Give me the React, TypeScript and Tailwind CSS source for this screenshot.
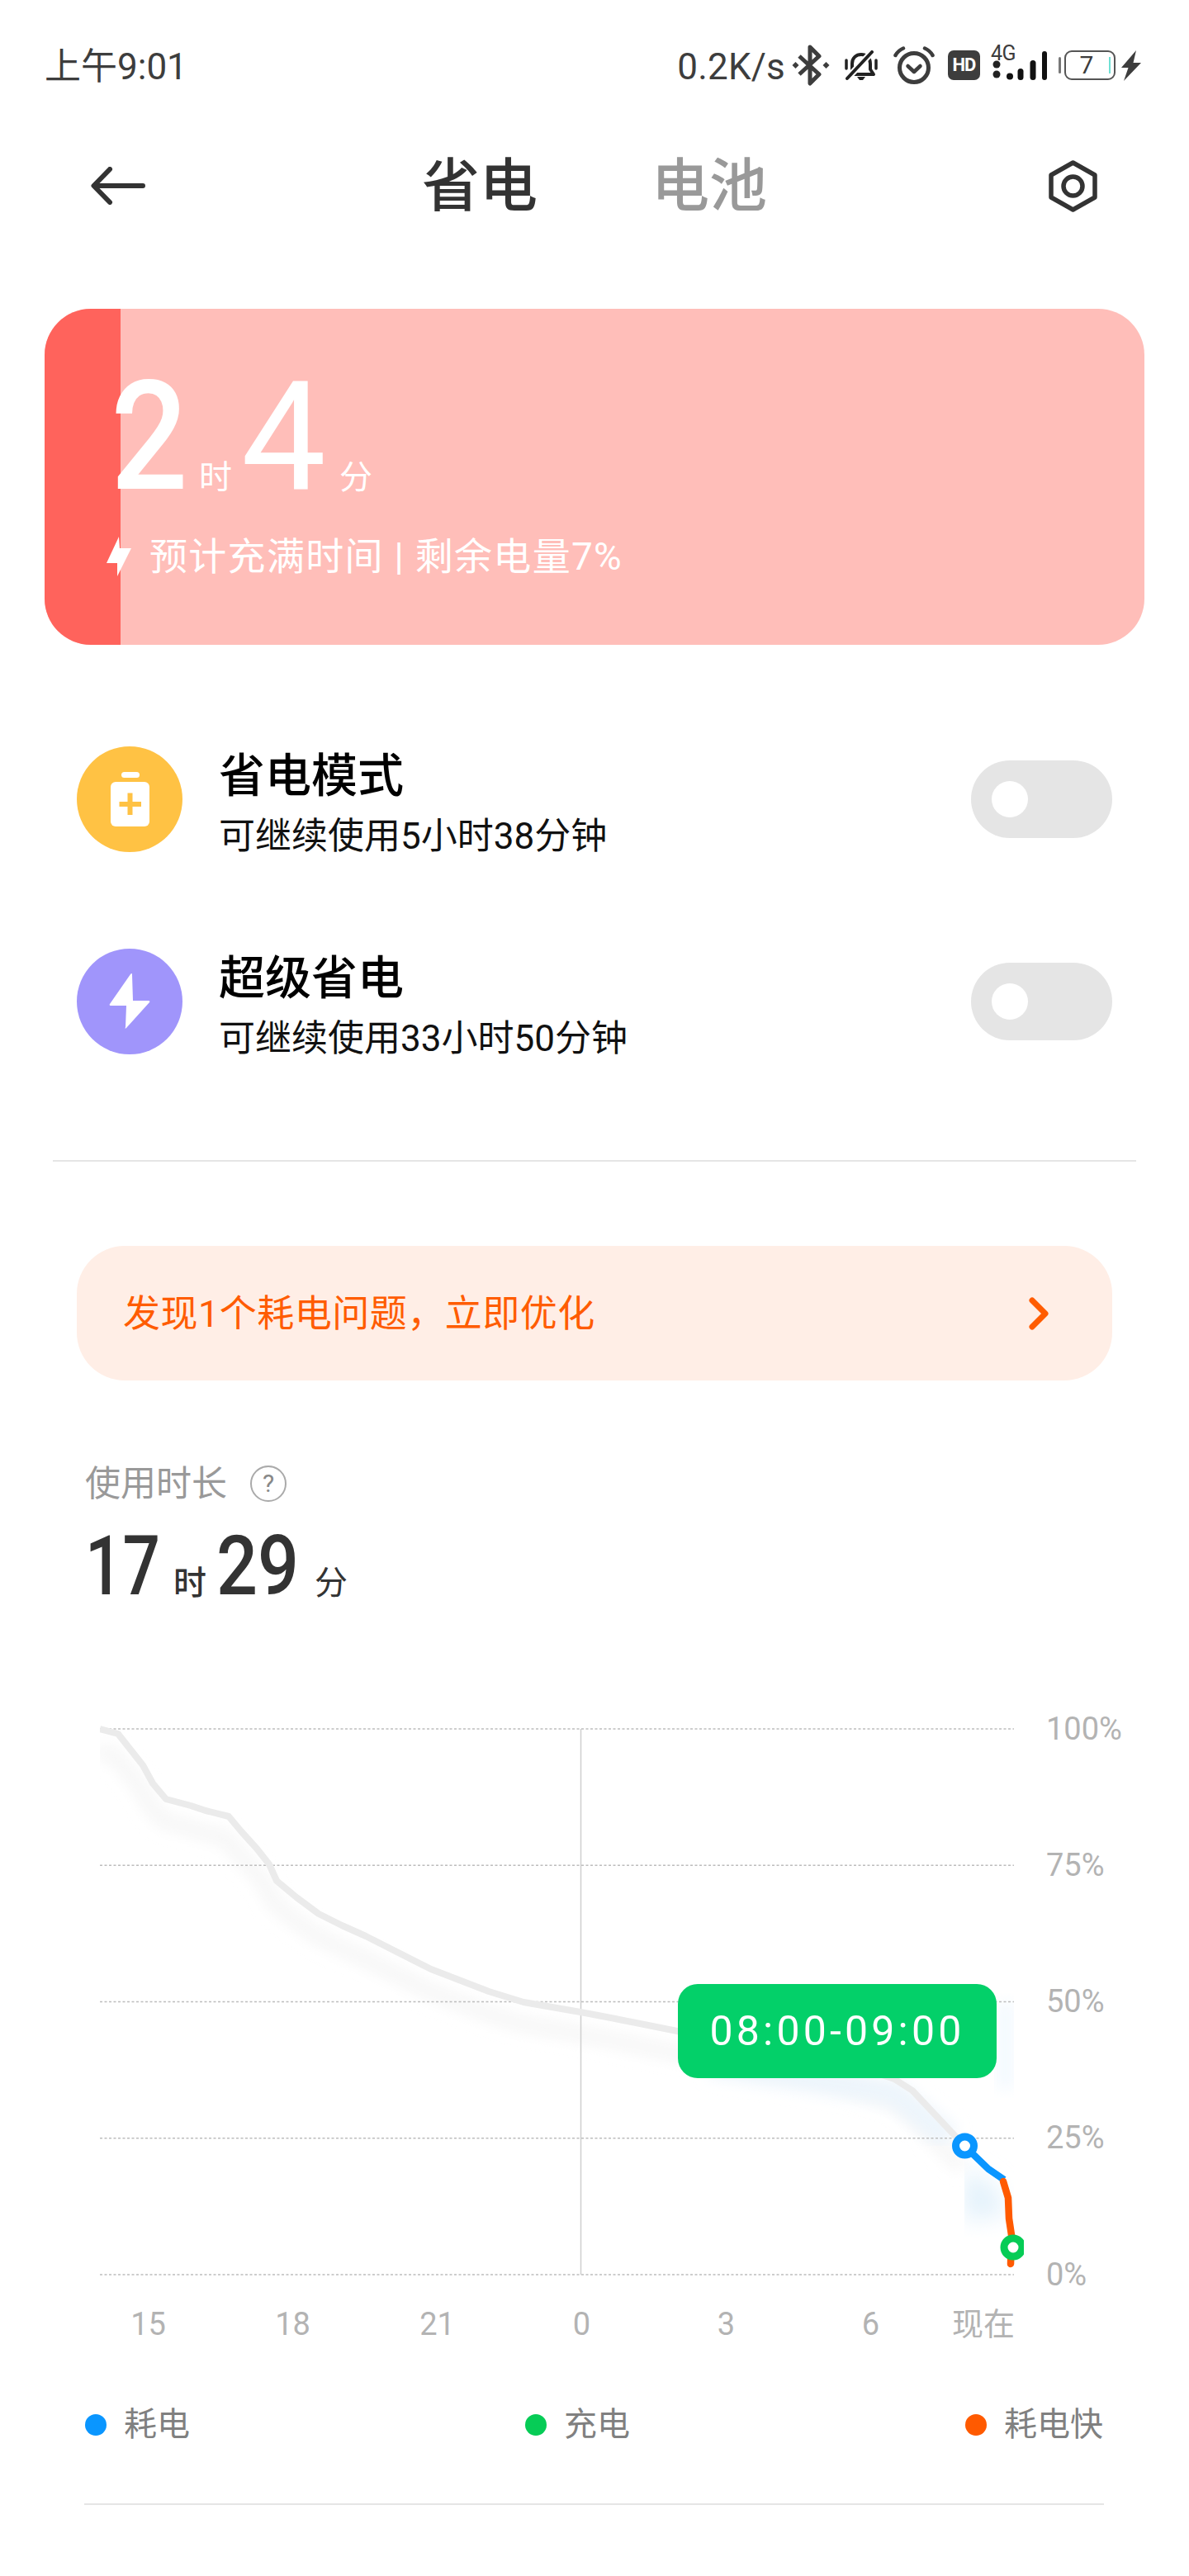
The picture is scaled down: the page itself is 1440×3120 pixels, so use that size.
import React from "react";

const curve =
  "M121 2094 L143 2100 L173 2138 L185 2160 L201 2179 L231 2187 L249 2193 L277 2200 L292 2218 L311 2239 L326 2258 L335 2278 L359 2298 L386 2318 L414 2332 L443 2345 L522 2385 L592 2412 L634 2425 L703 2437 L740 2444 L830 2462 L1000 2490 L1083 2518 L1105 2532 L1168 2599";

function Bluetooth() {
  return (
    <svg width="46" height="50" viewBox="0 0 46 50" className="block">
      <path d="M9 14 L33 36 L22 47 L22 3 L33 14 L9 36" fill="none" stroke="#3d3d3d" strokeWidth="5" strokeLinejoin="round" />
      <path d="M4.500 21 L8.500 25 L4.500 29 L0.500 25Z M41.500 21 L45.500 25 L41.500 29 L37.500 25Z" fill="#3d3d3d" />
    </svg>
  );
}

function BellOff() {
  return (
    <svg width="40" height="37" viewBox="0 0 40 37" className="block">
      <path d="M9 26 V16 C9 9 14 5 20 5 C26 5 31 9 31 16 V23 L35 29 H6 L9 26" fill="none" stroke="#222" strokeWidth="4" strokeLinejoin="round" />
      <path d="M15 32 H25 L22 36 H18Z" fill="#222" />
      <path d="M2 12 V22 M38 12 V22" stroke="#222" strokeWidth="3.500" strokeLinecap="round" />
      <path d="M4 33 L33 2" stroke="#fff" strokeWidth="8" />
      <path d="M3 34 L33 2" stroke="#222" strokeWidth="4" strokeLinecap="round" />
    </svg>
  );
}

function Alarm() {
  return (
    <svg width="50" height="46" viewBox="0 0 50 46" className="block">
      <circle cx="25" cy="26" r="17.500" fill="none" stroke="#3d3d3d" strokeWidth="5" />
      <path d="M17.500 24 L25 31 L32.500 24" fill="none" stroke="#3d3d3d" strokeWidth="4.500" strokeLinecap="round" strokeLinejoin="round" />
      <path d="M2.500 11 Q6 5 12 2.500 M47.500 11 Q44 5 38 2.500" fill="none" stroke="#3d3d3d" strokeWidth="4.500" strokeLinecap="round" />
    </svg>
  );
}

function Signal() {
  return (
    <svg width="68" height="40" viewBox="0 0 68 40" className="block">
      <circle cx="7" cy="19" r="4.500" fill="#222" />
      <circle cx="7" cy="31" r="4.500" fill="#222" />
      <circle cx="23" cy="33.500" r="4" fill="#111" />
      <rect x="32.500" y="24" width="7" height="14" rx="3.500" fill="#111" />
      <rect x="47.500" y="14" width="7" height="24" rx="3.500" fill="#111" />
      <rect x="62" y="3" width="6" height="35" rx="3" fill="#111" />
    </svg>
  );
}

function StatusRight() {
  return (
    <div className="flex items-center">
      <span className="pt-[3px] text-[44px] leading-none text-[#3d3d3d] tracking-[0.2px]">0.2K/s</span>
      <div className="ml-[8px]"><Bluetooth /></div>
      <div className="ml-[18px]"><BellOff /></div>
      <div className="ml-[19px]"><Alarm /></div>
      <div className="ml-[16px] flex h-[36px] w-[39px] items-center justify-center rounded-[7px] bg-[#3d3d3d] text-[22px] font-bold leading-none tracking-[-1px] text-white">HD</div>
      <div className="relative ml-[13px] h-[40px] w-[68px] shrink-0">
        <Signal />
        <span className="absolute left-[0px] top-[-6px] text-[25px] leading-[24px] tracking-[-0.5px] text-[#3d3d3d]">4G</span>
      </div>
      <div className="ml-[14px] h-[20px] w-[3px] rounded-full bg-[#777]" />
      <div className="relative ml-[4px] flex h-[36px] w-[62px] items-center rounded-[9px] border-[2.500px] border-[#555]">
        <span className="w-[50px] text-center text-[30px] leading-none text-[#3d3d3d]">7</span>
        <div className="absolute right-[4px] top-[6px] h-[20px] w-[2px] bg-[#6fe0d4]" />
      </div>
      <svg width="24" height="37" viewBox="0 0 24 37" className="ml-[7px] block">
        <path d="M18 0 L0 21 H8.500 L3 37 L24 15 H14.500Z" fill="#3d3d3d" />
      </svg>
    </div>
  );
}

function Toggle() {
  return (
    <div className="ml-auto flex h-[94px] w-[171px] shrink-0 items-center rounded-full bg-[#e5e5e5] pl-[25px]">
      <div className="h-[44px] w-[44px] rounded-full bg-white" />
    </div>
  );
}

function ModeRow({ icon, bg, title, sub, className }: { icon: React.ReactNode; bg: string; title: string; sub: string; className: string }) {
  return (
    <div className={"flex items-center " + className}>
      <div className={"flex h-[128px] w-[128px] shrink-0 items-center justify-center rounded-full " + bg}>{icon}</div>
      <div className="ml-[44px] h-[128px] pt-[1px]">
        <div className="text-[56px] font-medium leading-[70px] text-black">{title}</div>
        <div className="mt-[11px] text-[44px] leading-[54px] text-[#111]">{sub}</div>
      </div>
      <Toggle />
    </div>
  );
}

function Chart() {
  const gridYs = [2094, 2259.25, 2424.5, 2589.75, 2755];
  return (
    <svg width="1240" height="780" viewBox="0 2011 1240 780" className="block shrink-0">
      <defs>
        <filter id="soft" x="-10%" y="-10%" width="120%" height="120%">
          <feGaussianBlur stdDeviation="9" />
        </filter>
        <filter id="softer" x="-30%" y="-30%" width="160%" height="160%">
          <feGaussianBlur stdDeviation="14" />
        </filter>
        <clipPath id="plot"><rect x="121" y="2011" width="1107" height="790" /></clipPath>
        <clipPath id="blueclip"><rect x="1168" y="2600" width="60" height="130" /></clipPath>
        <clipPath id="greenclip"><rect x="1200" y="2735" width="28" height="60" /></clipPath>
      </defs>
      <g clipPath="url(#plot)">
        <path d={curve} transform="translate(-4 26)" fill="none" stroke="#f5f5f5" strokeWidth="16" filter="url(#soft)" />
        <path d="M860 2500 L1083 2535 L1150 2590" fill="none" stroke="#edf5fc" strokeWidth="30" filter="url(#soft)" />
        <path d="M1207 2425 L1228 2425 L1228 2530 L1207 2530Z" fill="#f3f9fe" filter="url(#soft)" />
      </g>
      <g clipPath="url(#blueclip)">
        <path d="M1168 2625 L1200 2645 L1222 2680 L1168 2690Z" fill="#e2f1fb" filter="url(#softer)" />
      </g>
      <g clipPath="url(#greenclip)">
        <path d="M1222 2735 L1222 2785" stroke="#d8f3e2" strokeWidth="16" filter="url(#soft)" />
      </g>
      {gridYs.map((y) => (
        <line key={y} x1="121" x2="1228" y1={y} y2={y} stroke="#bdbdbd" strokeWidth="1.500" strokeDasharray="3 2.500" />
      ))}
      <line x1="703.500" x2="703.500" y1="2094" y2="2755" stroke="#cfcfcf" strokeWidth="1.500" />
      <g clipPath="url(#plot)">
        <path d={curve} fill="none" stroke="#ebebeb" strokeWidth="8" strokeLinejoin="round" />
      </g>
      <path d="M1168 2599 L1197 2627 L1216 2640" fill="none" stroke="#0a96ff" strokeWidth="8.500" strokeLinejoin="round" />
      <path d="M1215 2642 L1221 2662 L1222 2687 L1225 2707 L1224 2742" fill="none" stroke="#ff5a00" strokeWidth="8.500" strokeLinecap="round" strokeLinejoin="round" />
      <circle cx="1168.500" cy="2599" r="11" fill="#fff" stroke="#0a96ff" strokeWidth="9" />
      <circle cx="1227" cy="2722" r="11" fill="#fff" stroke="#06cc56" strokeWidth="9" />
    </svg>
  );
}

const yLabels = ["100%", "75%", "50%", "25%", "0%"];
const xLabels = ["15", "18", "21", "0", "3", "6"];

export default function App() {
  return (
    <div className="h-[3120px] w-[1440px] overflow-hidden bg-white [font-family:Roboto,'Noto_Sans_CJK_SC',sans-serif]">
      {/* status bar */}
      <div className="flex h-[158px] items-center justify-between pl-[54px] pr-[58px]">
        <span className="pt-[4px] text-[44px] leading-none text-[#3d3d3d]">上午9:01</span>
        <StatusRight />
      </div>

      {/* title bar */}
      <div className="grid h-[134px] grid-cols-[1fr_auto_1fr] items-center px-[110px]">
        <svg width="66" height="46" viewBox="0 0 66 46" className="block">
          <path d="M63 23 H4 M23 3 L3.500 23 L23 43" fill="none" stroke="#333" strokeWidth="6" strokeLinecap="round" strokeLinejoin="round" />
        </svg>
        <div className="flex items-center gap-[138px] pt-[2px] text-[70px] font-medium leading-none">
          <span className="text-[#333]">省电</span>
          <span className="text-[#999]">电池</span>
        </div>
        <svg width="59" height="63" viewBox="0 0 59 63" className="mr-[1px] block justify-self-end">
          <path d="M29.500 3 L56 18 V45 L29.500 60 L3 45 V18Z" fill="none" stroke="#333" strokeWidth="5.500" strokeLinejoin="round" />
          <circle cx="29.500" cy="31.500" r="11.500" fill="none" stroke="#333" strokeWidth="5.500" />
        </svg>
      </div>

      {/* battery card */}
      <div className="relative mx-[54px] mt-[82px] h-[407px] overflow-hidden rounded-[56px] bg-[#ffbeb9]">
        <div className="absolute inset-y-0 left-0 w-[92px] bg-[#ff635c]" />
        <div className="relative pl-[80px] text-white">
          <div className="flex items-baseline pt-[62px]">
            <span className="inline-block w-[93px] origin-left scale-x-90 text-[183px] font-medium leading-[188px]">2</span>
            <span className="ml-[14px] text-[40px] leading-none">时</span>
            <span className="ml-[11px] inline-block w-[103px] text-[183px] leading-[188px]">4</span>
            <span className="ml-[16px] text-[40px] leading-none">分</span>
          </div>
          <div className="-ml-[4px] mt-[24px] flex items-center">
            <svg width="30" height="48" viewBox="0 0 30 48" className="-ml-[1px] block shrink-0">
              <path d="M15 0 L0 32 H13 L13 48 L30 14 H16Z" fill="#fff" />
            </svg>
            <span className="ml-[22px] text-[46px] leading-[52px] tracking-[1.300px]">预计充满时间 | 剩余电量7%</span>
          </div>
        </div>
      </div>

      {/* modes */}
      <div className="px-[93px]">
        <ModeRow
          className="mt-[123px]"
          bg="bg-[#ffc244]"
          title="省电模式"
          sub="可继续使用5小时38分钟"
          icon={
            <svg width="47" height="66" viewBox="0 0 47 66" className="block">
              <rect x="13" y="0" width="22" height="7" rx="3.500" fill="#fff" />
              <rect x="0" y="12" width="47" height="54" rx="6" fill="#fff" />
              <path d="M10.500 39 H37 M23.500 25.500 V52" stroke="#ffc244" strokeWidth="6" />
            </svg>
          }
        />
        <ModeRow
          className="mt-[117px]"
          bg="bg-[#a095fb]"
          title="超级省电"
          sub="可继续使用33小时50分钟"
          icon={
            <svg width="50" height="68" viewBox="0 0 50 68" className="block">
              <path d="M28 1.500 L29 33 H48 Q50 33 49 35 L21 66 Q19 68 20 65 L21 39 H2 Q0 39 1 37 L26 1 Q28 -1 28 1.500Z" fill="#fff" />
            </svg>
          }
        />
      </div>

      <div className="mx-[64px] mt-[128px] h-[2px] bg-[#e5e5e5]" />

      {/* issue banner */}
      <div className="mx-[93px] mt-[102px] flex h-[163px] items-center justify-between rounded-[58px] bg-[#ffeee6] pl-[56px] pr-[76px]">
        <span className="pt-[2px] text-[45px] leading-none tracking-[0.5px] text-[#ff5c00]">发现1个耗电问题，立即优化</span>
        <svg width="25" height="40" viewBox="0 0 25 40" className="block">
          <path d="M4 4 L20 20 L4 36" fill="none" stroke="#ff5c00" strokeWidth="7" strokeLinecap="round" strokeLinejoin="round" />
        </svg>
      </div>

      {/* usage */}
      <div className="ml-[103px] mt-[100px]">
        <div className="flex items-center text-[43px] leading-[50px] text-[#999]">
          使用时长
          <span className="ml-[28px] flex h-[44px] w-[44px] items-center justify-center rounded-full border-[2.500px] border-[#aaa] text-[30px] leading-none text-[#888]">?</span>
        </div>
        <div className="mt-[20px] flex items-baseline text-[#333]">
          <span className="inline-block w-[90px] origin-left scale-x-[0.8] text-[100px] font-medium leading-[110px]">17</span>
          <span className="ml-[17px] text-[40px] font-medium leading-none">时</span>
          <span className="ml-[12px] inline-block w-[99px] origin-left scale-x-[0.88] text-[100px] font-medium leading-[110px]">29</span>
          <span className="ml-[20px] text-[40px] leading-none">分</span>
        </div>
      </div>

      {/* chart */}
      <div className="relative mt-[59px]">
        <div className="flex">
          <Chart />
          <div className="h-[780px] pl-[27px] text-[38px] text-[#b3b3b3]">
            {yLabels.map((l) => (
              <div key={l} className="flex h-[165.250px] items-center leading-none">{l}</div>
            ))}
          </div>
        </div>
        <div className="absolute left-[821px] top-[392px] flex h-[114px] w-[386px] items-center justify-center rounded-[24px] bg-[#03d069] text-[50px] leading-none tracking-[4.200px] text-white">
          08:00-09:00
        </div>
        <div className="mt-[2px] flex h-[44px] items-center pl-[92px] text-[38px] leading-none text-[#b3b3b3]">
          {xLabels.map((l) => (
            <span key={l} className="w-[175px] text-center">{l}</span>
          ))}
          <span className="ml-[11px]">现在</span>
        </div>
      </div>

      {/* legend */}
      <div className="mt-[77px] flex items-center justify-between pl-[103px] pr-[104px] text-[40px] leading-[46px] text-[#808080]">
        <div className="flex items-center gap-[21px]"><i className="block h-[26px] w-[26px] rounded-full bg-[#0a96ff]" />耗电</div>
        <div className="flex items-center gap-[21px]"><i className="block h-[26px] w-[26px] rounded-full bg-[#06cc56]" />充电</div>
        <div className="flex items-center gap-[21px]"><i className="block h-[26px] w-[26px] rounded-full bg-[#ff5a00]" />耗电快</div>
      </div>

      <div className="ml-[102px] mr-[103px] mt-[72px] h-[2px] bg-[#e5e5e5]" />
    </div>
  );
}
